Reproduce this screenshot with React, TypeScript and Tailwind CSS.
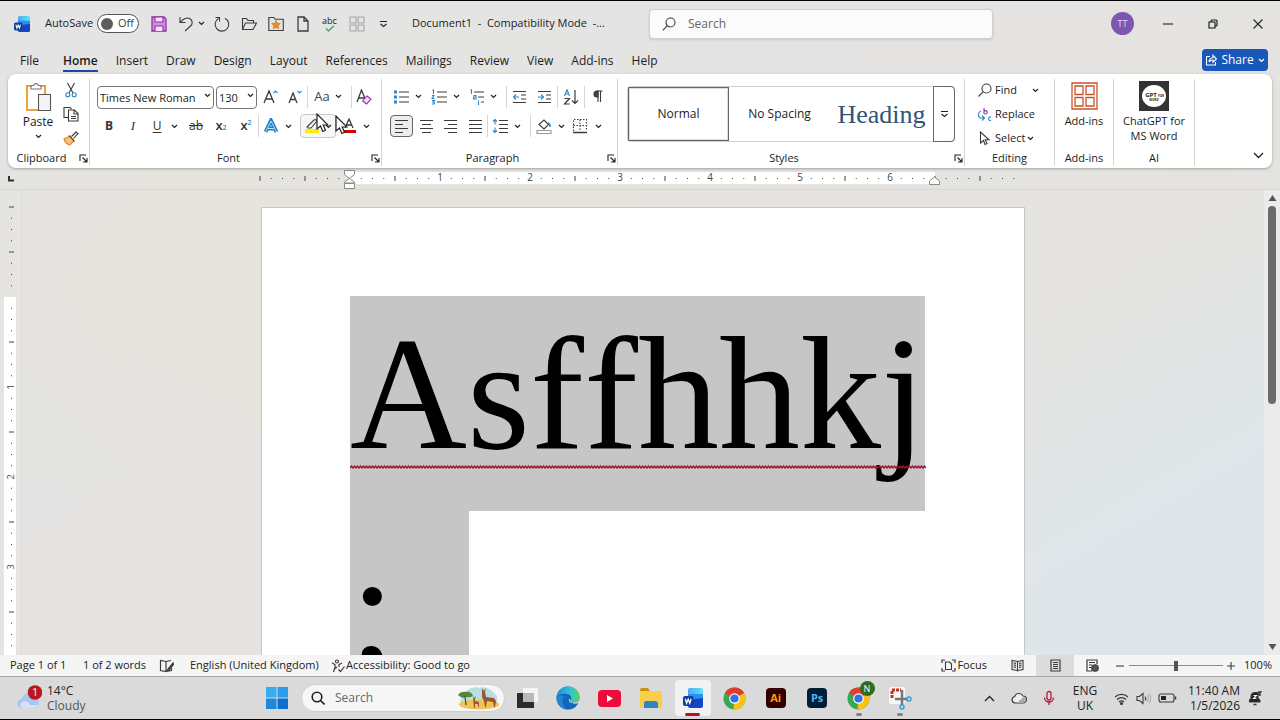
import React from 'react';
import { clsx } from 'clsx';

type IconProps = { children: React.ReactNode; w?: number; h?: number; className?: string };

// Small stroke icon drawn on its own pixel grid
const Icon: React.FC<IconProps> = ({ children, w = 18, h = 18, className }) => (
  <svg
    width={w}
    height={h}
    viewBox={`0 0 ${w} ${h}`}
    fill="none"
    stroke="#3b3b3b"
    strokeWidth="1.1"
    aria-hidden="true"
    className={clsx('shrink-0', className)}
  >
    {children}
  </svg>
);

const Chevron: React.FC<{ className?: string }> = ({ className }) => (
  <Icon w={7} h={5} className={className}>
    <path d="M1 1l2.500 2.500L6 1" stroke="#222" strokeWidth="1.200" />
  </Icon>
);

const Sep: React.FC = () => <span className="h-[22px] w-px shrink-0 bg-[#d6d6d6]" />;

type ToolProps = { label: string; className?: string; children: React.ReactNode };

const Tool: React.FC<ToolProps> = ({ label, className, children }) => (
  <button
    type="button"
    aria-label={label}
    className={clsx('flex h-[22px] shrink-0 items-center justify-center', className)}
  >
    {children}
  </button>
);

const Drop: React.FC<{ label: string; className?: string }> = ({ label, className }) => (
  <Tool label={label} className={className ?? 'w-[10px]'}>
    <Chevron />
  </Tool>
);

type GroupProps = { title: string; className: string; launcher?: boolean; children: React.ReactNode };

const Group: React.FC<GroupProps> = ({ title, className, launcher, children }) => (
  <section className={clsx('flex shrink-0 flex-col border-r border-[#d4d4d4]', className)}>
    <div className="min-h-0 flex-1">{children}</div>
    <div className="flex h-4 shrink-0 items-center">
      <h2 className="flex-1 text-center text-[11px] font-medium leading-4">{title}</h2>
      {launcher && (
        <button type="button" aria-label={`${title} settings`} className="flex w-3.5 justify-end pr-px">
          <Icon w={9} h={9}>
            <path d="M1 7V1h6M3.500 3.500l4 4M8 4v4H4" stroke="#222" />
          </Icon>
        </button>
      )}
    </div>
  </section>
);

const WordLogo: React.FC<{ size: number }> = ({ size }) => (
  <svg width={size} height={size} viewBox="0 0 20 20" aria-hidden="true" className="shrink-0">
    <defs>
      <linearGradient id="wordTop" x1="0" x2="1">
        <stop offset="0" stopColor="#4aa8f5" />
        <stop offset="1" stopColor="#5fe3f5" />
      </linearGradient>
    </defs>
    <path d="M5 2a2 2 0 012-2h11a2 2 0 012 2v5H5z" fill="url(#wordTop)" />
    <path d="M5 6h15v7H5z" fill="#2b8df0" />
    <path d="M5 12l15-2v8a2 2 0 01-2 2H7a2 2 0 01-2-2z" fill="#1744c2" />
    <rect x="0" y="8" width="10.500" height="10" rx="2" fill="#0f3f9e" />
    <path d="M2.300 10.800l1.300 4.500 1.600-4 1.600 4 1.300-4.500" fill="none" stroke="#fff" strokeWidth="1.300" />
  </svg>
);

const TitleBar: React.FC = () => (
  <header className="flex h-[45px] shrink-0 items-center">
    <div className="flex w-[649px] shrink-0 items-center pl-[14px]">
      <WordLogo size={16} />
      <label htmlFor="autosave" className="ml-[15px] w-[52px] text-[11px]">AutoSave</label>
      <button
        id="autosave"
        type="button"
        role="switch"
        aria-checked="false"
        className="flex h-[19px] w-[42px] items-center gap-[5px] rounded-full border border-[#555] bg-white pl-[3px] text-[11px] text-[#444]"
      >
        <span className="size-3 rounded-full bg-[#5c5c5c]" />
        Off
      </button>
      <Tool label="Save" className="ml-[6px] w-[27px]">
        <Icon w={16} h={16}>
          <path d="M1 1h12l2 2v12H1z" fill="#d88be8" stroke="#8e2fa3" strokeWidth="1.300" />
          <path d="M4 1h8v5H4zM4 15v-5h8v5" fill="#f6e3fa" stroke="#8e2fa3" />
        </Icon>
      </Tool>
      <Tool label="Undo" className="w-[27px]">
        <Icon w={16} h={16}>
          <path d="M2 1v5.500h5.500M2.300 6.300C5 2.500 9 1 12 2.800c3 2 2.700 5.200.5 7.200L7 15" />
        </Icon>
      </Tool>
      <Drop label="Undo list" className="-ml-1 w-[13px]" />
      <Tool label="Repeat" className="w-[27px]">
        <Icon w={16} h={16}>
          <path d="M11 2.300a6.800 6.800 0 11-6.500.2M1.500 1.500h4v4" />
        </Icon>
      </Tool>
      <Tool label="Open" className="w-[27px]">
        <Icon w={16} h={16}>
          <path d="M1.500 13.500v-11h4l1.500 2h5.500V7M1.500 13.500L4.500 7h11L12 13.500z" />
        </Icon>
      </Tool>
      <Tool label="Favourites" className="w-[27px]">
        <Icon w={16} h={16}>
          <path d="M.8 14.500v-13h5l1.500 1.800h8v11.200z" />
          <path d="M8 4.500l1.300 2.700 3 .4-2.200 2.100.6 3L8 11.300l-2.700 1.400.6-3-2.200-2.100 3-.4z" fill="#f08a24" stroke="#c96c10" strokeWidth=".6" />
        </Icon>
      </Tool>
      <Tool label="New" className="w-[27px]">
        <Icon w={12} h={16}>
          <path d="M1 1h6l4 4v10H1zM7 1v4h4" strokeWidth="1.300" />
        </Icon>
      </Tool>
      <button type="button" aria-label="Spelling" className="flex w-[27px] flex-col items-center text-[9px] leading-[9px]">
        abc
        <Icon w={10} h={7}>
          <path d="M1 3.500L3.500 6 9 .8" stroke="#3da65a" strokeWidth="1.300" />
        </Icon>
      </button>
      <Tool label="Add-ins" className="w-[27px]">
        <Icon w={16} h={16}>
          <path d="M1 1h6v6H1zM9 1h6v6H9zM1 9h6v6H1zM9 9h6v6H9z" stroke="#a5a5a5" />
        </Icon>
      </Tool>
      <Tool label="Customize toolbar" className="w-[27px]">
        <Icon w={9} h={8}>
          <path d="M1 1.500h7M1.500 4l3 2.500 3-2.500" stroke="#222" />
        </Icon>
      </Tool>
      <h1 className="ml-[15px] whitespace-pre text-[11px] font-medium">Document1  -  Compatibility Mode  -...</h1>
    </div>

    <label className="flex h-[30px] w-[344px] min-w-0 items-center gap-3 rounded border border-[#d2d0ce] bg-[#fbfbfb] pl-3 shadow-sm">
      <Icon w={14} h={14}>
        <circle cx="8.500" cy="5.500" r="4.500" />
        <path d="M5.300 8.700L.8 13.300" />
      </Icon>
      <input aria-label="Search" placeholder="Search" className="min-w-0 flex-1 bg-transparent text-[12px] outline-none placeholder:text-[#666]" />
    </label>

    <div className="ml-auto flex items-center">
      <button type="button" aria-label="Account" className="mr-[11px] flex size-[23px] items-center justify-center rounded-full bg-[#7f56ad] text-[9px] text-[#e8d8ff]">
        TT
      </button>
      <Tool label="Minimize" className="w-[45px]">
        <Icon w={10} h={10}><path d="M0 5h10" stroke="#222" /></Icon>
      </Tool>
      <Tool label="Restore" className="w-[45px]">
        <Icon w={10} h={10}>
          <path d="M1 3h6v6H1zM3 3V2q0-1 1-1h4q1 0 1 1v4q0 1-1 1H7" stroke="#111" />
        </Icon>
      </Tool>
      <Tool label="Close" className="w-[45px]">
        <Icon w={10} h={10}><path d="M.5.5l9 9M9.500.5l-9 9" stroke="#222" /></Icon>
      </Tool>
    </div>
  </header>
);

const tabs = ['Insert', 'Draw', 'Design', 'Layout', 'References', 'Mailings', 'Review', 'View', 'Add-ins', 'Help'];

const TabBar: React.FC = () => (
  <div className="flex h-7 shrink-0 items-center pl-5 pr-3">
    <nav className="flex items-center gap-[18px] pt-0.5 text-[12px] leading-5">
      <a href="#file" className="mr-[6px]">File</a>
      <a href="#home" className="border-b-2 border-[#1b4a9c] pt-0.5 font-semibold leading-[18px]">Home</a>
      {tabs.map(tab => (
        <a key={tab} href={`#${tab.toLowerCase()}`}>{tab}</a>
      ))}
    </nav>
    <button type="button" className="ml-auto flex h-[22px] w-[66px] items-center justify-center gap-1 rounded bg-[#1858b8] text-[12px] text-white">
      <Icon w={12} h={12}>
        <path d="M5 2.500H1.500v8.500h9V8M4 8c.3-3 2-4.300 4-4.300V1.300L11.500 5 8 8.200V6C6.500 6 5 6.500 4 8z" stroke="#fff" />
      </Icon>
      Share
      <Icon w={7} h={5}><path d="M1 1l2.500 2.500L6 1" stroke="#fff" strokeWidth="1.200" /></Icon>
    </button>
  </div>
);

const ClipboardGroup: React.FC = () => (
  <Group title="Clipboard" launcher className="w-[82px]">
    <div className="flex">
      <button type="button" className="ml-[9px] mt-[3px] flex w-[42px] flex-col items-center text-[12px] leading-4">
        <Icon w={28} h={30} className="mb-0.5">
          <path d="M3 4h18v24H3z" fill="#fff" stroke="#e8a33d" strokeWidth="2" />
          <path d="M7 7V3.500h2.500a2.600 2.600 0 015 0H17V7z" fill="#fff" stroke="#777" />
          <path d="M14.500 12.500h12v16h-12z" fill="#f4f4f4" stroke="#555" />
        </Icon>
        Paste
        <Chevron className="mt-1" />
      </button>
      <div className="ml-[3px] flex flex-col gap-[2px]">
        <Tool label="Cut" className="w-[18px]">
          <Icon w={12} h={16}>
            <path d="M2.500 1l5.500 10M9.500 1L4 11" />
            <circle cx="2.800" cy="12.800" r="2" stroke="#2a86c8" />
            <circle cx="9.200" cy="12.800" r="2" stroke="#2a86c8" />
          </Icon>
        </Tool>
        <Tool label="Copy" className="w-[18px]">
          <Icon w={16} h={16}>
            <path d="M5 11.500H1v-10h6l1.500 1.500" />
            <path d="M5.500 4h6l3.500 3.500V15H5.500zM11 4v4h4M8 10.500h5M8 12.500h5" />
          </Icon>
        </Tool>
        <Tool label="Format Painter" className="w-[18px]">
          <Icon w={16} h={16}>
            <path d="M1 9l6-3 4 5-4 4c-2-.5-5-3-6-6z" fill="#f6c27a" stroke="#d9822b" />
            <path d="M6 5.500l5.500 6M8.500 6.500L13 2l2 1.500-4.500 5" />
          </Icon>
        </Tool>
      </div>
    </div>
  </Group>
);

const selectClass = 'h-[23px] w-full appearance-none rounded border border-[#777] bg-white pl-[2px] text-[11px] leading-5 text-[#222]';

const FontGroup: React.FC = () => (
  <Group title="Font" launcher className="w-[292px]">
    <div className="flex h-[23px] items-center pl-[7px] mt-[6px]">
      <div className="relative mr-[2px] w-[117px] shrink-0">
        <select aria-label="Font" className={selectClass}><option>Times New Roman</option></select>
        <Chevron className="pointer-events-none absolute right-[3px] top-[9px]" />
      </div>
      <div className="relative w-[41px] shrink-0">
        <select aria-label="Font size" className={selectClass}><option>130</option></select>
        <Chevron className="pointer-events-none absolute right-[3px] top-[9px]" />
      </div>
      <Tool label="Grow font" className="ml-[2px] w-6">
        <Icon w={16} h={16}>
          <path d="M1 14L6 2l5 12M2.800 10h6.500" strokeWidth="1.300" />
          <path d="M10.500 4L12.500 2l2 2" stroke="#2a86c8" />
        </Icon>
      </Tool>
      <Tool label="Shrink font" className="w-6">
        <Icon w={14} h={16}>
          <path d="M1 14l4-10 4 10M2.500 10.500h5" strokeWidth="1.300" />
          <path d="M9.500 2l2 2 2-2" stroke="#2a86c8" />
        </Icon>
      </Tool>
      <Sep />
      <Tool label="Change case" className="ml-[2px] w-6 text-[13px] text-[#444]">Aa</Tool>
      <Drop label="Change case options" className="-ml-px w-[10px]" />
      <span className="w-2" />
      <Sep />
      <Tool label="Clear formatting" className="w-6">
        <Icon w={16} h={16}>
          <path d="M1 13L5.500 1 10 12M2.500 9H8" strokeWidth="1.300" />
          <path d="M6.500 12l4.500-5 4 3-4.500 5z" fill="#f2ddf5" stroke="#8e2fa3" />
        </Icon>
      </Tool>
    </div>
    <div className="flex h-[22px] items-center pl-[7px] mt-[7px] text-[13px] text-[#333]">
      <Tool label="Bold" className="w-6 text-[12px] font-bold">B</Tool>
      <Tool label="Italic" className="w-6 font-['Liberation_Serif',serif] italic">I</Tool>
      <Tool label="Underline" className="w-6 text-[12px] underline underline-offset-2">U</Tool>
      <Drop label="Underline style" />
      <Tool label="Strikethrough" className="ml-[5px] w-6 text-[12px] line-through">ab</Tool>
      <Tool label="Subscript" className="w-[26px] font-semibold">
        x<sub className="text-[7px] text-[#2a86c8]">2</sub>
      </Tool>
      <Tool label="Superscript" className="w-6 font-semibold">
        x<sup className="text-[7px] text-[#2a86c8]">2</sup>
      </Tool>
      <Sep />
      <Tool label="Text effects" className="w-6">
        <Icon w={16} h={16}>
          <path d="M2.500 14L8 2.500 13.500 14M5 10.500h6" stroke="#1f7fc4" strokeWidth="3.800" />
          <path d="M2.500 14L8 3l5.500 11M5 10.500h6" stroke="#bfe0f5" strokeWidth="1" />
        </Icon>
      </Tool>
      <Drop label="Text effects options" />
      <div className="ml-[7px] flex rounded border border-[#c8c8c8] bg-[#f7f7f7]">
        <Tool label="Highlight colour" className="w-[21px]">
          <Icon w={16} h={16}>
            <path d="M3 9L10 2q2-1 3 1L7 10H4z" />
            <path d="M1 13h14" stroke="#ffee00" strokeWidth="4" />
          </Icon>
        </Tool>
        <Drop label="Highlight colours" className="w-[13px]" />
      </div>
      <Tool label="Font colour" className="ml-[1px] w-6">
        <Icon w={16} h={16}>
          <path d="M4 10L8 1l4 9M5.500 7h5" strokeWidth="1.300" />
          <path d="M1 13.500h14" stroke="#d40000" strokeWidth="3" />
        </Icon>
      </Tool>
      <Drop label="Font colours" />
    </div>
  </Group>
);

// Rows of an alignment or list glyph as [x1, x2] pairs
const bars = (rows: number[][]) => rows.map(([a, b], i) => <path key={i} d={`M${a} ${2.5 + i * 4}H${b}`} />);

const ParagraphGroup: React.FC = () => (
  <Group title="Paragraph" launcher className="w-[236px]">
    <div className="flex h-[23px] items-center pl-[7px] mt-[6px]">
      <Tool label="Bullets" className="w-[23px]">
        <Icon w={16} h={16}>
          <path d="M6 3h10M6 8h10M6 13h10" />
          <path d="M1 3h3M1 8h3M1 13h3" stroke="#2a86c8" strokeWidth="3" />
        </Icon>
      </Tool>
      <Drop label="Bullet styles" className="w-3" />
      <Tool label="Numbering" className="ml-[3px] w-[23px]">
        <Icon w={16} h={16}>
          <path d="M6 3h10M6 8h10M6 13h10" />
          <path d="M1.500 1.500l1-.5v4M1 6.500h2L1 9.500h2.500M1 11.500h2.500L2 13l1.500.5L3 15H1" stroke="#2a86c8" />
        </Icon>
      </Tool>
      <Drop label="Numbering styles" className="w-3" />
      <Tool label="Multilevel list" className="ml-[3px] w-[23px]">
        <Icon w={16} h={16}>
          <path d="M5 3h10M9 8h6M12 13h3" />
          <path d="M1.500 1.500l1-.5v4M4.500 6.500h2.500V10H4.500V8H7M9.500 11v.8M9.500 12.500V16" stroke="#2a86c8" />
        </Icon>
      </Tool>
      <Drop label="Multilevel styles" />
      <span className="w-2" />
      <Sep />
      <Tool label="Decrease indent" className="w-[25px]">
        <Icon w={15} h={14}>
          <path d="M1 1.500h13M9 5h5M9 9h5M1 12.500h13" />
          <path d="M7 7H1.500M4 4.500L1.500 7 4 9.500" stroke="#2a86c8" />
        </Icon>
      </Tool>
      <Tool label="Increase indent" className="w-[25px]">
        <Icon w={15} h={14}>
          <path d="M1 1.500h13M9 5h5M9 9h5M1 12.500h13" />
          <path d="M1 7h5.500M4 4.500L6.500 7 4 9.500" stroke="#2a86c8" />
        </Icon>
      </Tool>
      <Sep />
      <Tool label="Sort" className="w-[26px]">
        <Icon w={16} h={16}>
          <path d="M1.500 7L4 .8 6.500 7M2.300 5h3.400" stroke="#2a86c8" />
          <path d="M1.500 9.500h5L1.500 15h5.300M12 1v13.500M9 11.500l3 3 3-3" strokeWidth="1.200" />
        </Icon>
      </Tool>
      <Sep />
      <Tool label="Show marks" className="w-[26px]">
        <Icon w={10} h={13}>
          <path d="M5 1v11M7.500 1v11M9.500 1H4" />
          <path d="M5 1H4a3 3 0 000 6h1z" fill="#444" />
        </Icon>
      </Tool>
    </div>
    <div className="flex h-[22px] items-center pl-[8px] mt-[7px]">
      <Tool label="Align left" className="mr-px w-[23px] rounded border border-[#666] bg-[#ededed]">
        <Icon w={15} h={16}>{bars([[1, 14], [1, 9], [1, 14], [1, 9]])}</Icon>
      </Tool>
      <Tool label="Centre" className="w-6">
        <Icon w={15} h={16}>{bars([[1, 14], [3, 12], [1, 14], [3, 12]])}</Icon>
      </Tool>
      <Tool label="Align right" className="w-[25px]">
        <Icon w={15} h={16}>{bars([[1, 14], [5, 14], [1, 14], [5, 14]])}</Icon>
      </Tool>
      <Tool label="Justify" className="w-6">
        <Icon w={15} h={16}>{bars([[1, 14], [1, 14], [1, 14], [1, 14]])}</Icon>
      </Tool>
      <Sep />
      <Tool label="Line spacing" className="w-6">
        <Icon w={16} h={16}>
          <path d="M7 2.500h9M7 6.500h9M7 10.500h9M7 14.500h9" />
          <path d="M3 1.500v5M1 3.500l2-2 2 2M3 9.500v5M1 12.500l2 2 2-2" stroke="#2a86c8" />
        </Icon>
      </Tool>
      <Drop label="Line spacing options" />
      <span className="w-2" />
      <Sep />
      <Tool label="Shading" className="w-[25px]">
        <Icon w={16} h={16}>
          <path d="M3 6.500L8 2l4.500 4.500L8 11z" />
          <path d="M12 5q2.500 1 2 4" stroke="#2a86c8" strokeWidth="1.500" />
          <path d="M1 12.500h14v3H1z" stroke="#999" />
        </Icon>
      </Tool>
      <Drop label="Shading colours" />
      <Tool label="Borders" className="ml-[2px] w-6">
        <Icon w={16} h={16}>
          <path d="M1.500 13V1.500h13V13M8 1.500V13M1.500 7.500h13" strokeDasharray="1.500 1.500" />
          <path d="M1 14.500h14" strokeWidth="1.600" />
        </Icon>
      </Tool>
      <Drop label="Border styles" className="w-3" />
    </div>
  </Group>
);

const StylesGroup: React.FC = () => (
  <Group title="Styles" launcher className="w-[347px]">
    <div className="mx-[9px] mt-[7px] flex h-[56px] items-stretch rounded border border-[#d0d0d0]">
      <button type="button" className="w-[101px] border border-[#666] text-[12px] font-medium ring-1 ring-inset ring-[#ddd]">Normal</button>
      <button type="button" className="w-[101px] text-[12px] font-medium">No Spacing</button>
      <button type="button" className="flex flex-1 items-center justify-center font-['Liberation_Serif',serif] text-[26px] text-[#2f5478]">
        Heading
      </button>
      <button type="button" aria-label="More styles" className="-my-px -mr-px flex w-[22px] items-center justify-center rounded-r border border-[#666]">
        <Icon w={9} h={8}><path d="M1 1.500h7M1.500 4l3 2.500 3-2.500" stroke="#222" /></Icon>
      </button>
    </div>
  </Group>
);

const EditingGroup: React.FC = () => (
  <Group title="Editing" className="w-[90px]">
    <div className="flex flex-col gap-[2px] pl-3 text-[11px]">
      <button type="button" className="flex h-[22px] items-center gap-[3px]">
        <Icon w={15} h={14}>
          <circle cx="9.500" cy="5.500" r="4.500" />
          <path d="M6.300 8.700L1.500 13.500" />
        </Icon>
        Find
        <Chevron className="ml-3" />
      </button>
      <button type="button" className="flex h-[22px] items-center gap-[3px]">
        <Icon w={15} h={15}>
          <path d="M7 1v5M7 4.500a1.700 1.700 0 103 0 1.700 1.700 0 00-3 0" stroke="#8e2fa3" />
          <path d="M4 4C1 5 .5 10 3.500 11H7M5 8.500L7.500 11 5 13.500M14 10c-3-1-3.500 4 0 3.500" stroke="#2a86c8" />
        </Icon>
        Replace
      </button>
      <button type="button" className="flex h-[22px] items-center gap-[3px]">
        <Icon w={15} h={15}>
          <path d="M3.500 1v11l3-2.500 1.500 4 2-1-1.800-3.700H12z" />
        </Icon>
        Select
        <Chevron className="-ml-px" />
      </button>
    </div>
  </Group>
);

const Ribbon: React.FC = () => (
  <div className="mx-2 flex h-[94px] shrink-0 overflow-hidden rounded-lg bg-white pb-[2px] pt-[5px] shadow-[0_1px_3px_rgba(0,0,0,0.3)]">
    <ClipboardGroup />
    <FontGroup />
    <ParagraphGroup />
    <StylesGroup />
    <EditingGroup />
    <Group title="Add-ins" className="w-[59px]">
      <button type="button" className="mt-[3px] flex w-full flex-col items-center gap-[3px] text-[11px] leading-4">
        <Icon w={27} h={28}>
          <path d="M1 1h25v26H1z" stroke="#c9532a" strokeWidth="1.300" />
          <path d="M4 4h8v8.500H4zM15 4h8v8.500h-8zM4 15.500h8V24H4zM15 15.500h8V24h-8z" stroke="#c9532a" strokeWidth="1.300" />
        </Icon>
        Add-ins
      </button>
    </Group>
    <Group title="AI" className="w-[81px]">
      <button type="button" className="mt-[2px] flex w-full flex-col items-center gap-[2px] text-[11px] leading-[15px]">
        <svg width="30" height="30" viewBox="0 0 30 30" className="shrink-0" aria-hidden="true">
          <rect width="30" height="30" fill="#333" />
          <ellipse cx="15" cy="15" rx="12" ry="11" fill="#fff" />
          <text x="12" y="16" textAnchor="middle" fontSize="6" fontWeight="700" fill="#222">GPT</text>
          <text x="22" y="16" textAnchor="middle" fontSize="3" fontWeight="700" fill="#222">FOR</text>
          <text x="15" y="20" textAnchor="middle" fontSize="3" fontWeight="700" fill="#222">WORD</text>
        </svg>
        <span>ChatGPT for<br />MS Word</span>
      </button>
    </Group>
    <div className="flex flex-1 items-end justify-end pb-[7px] pr-2">
      <button type="button" aria-label="Collapse ribbon">
        <Icon w={11} h={7}><path d="M1 1l4.500 4.500L10 1" stroke="#222" strokeWidth="1.300" /></Icon>
      </button>
    </div>
  </div>
);

const INCH = 90;

// Ticks every eighth of an inch, counted from the margin
const Ruler: React.FC = () => {
  const ticks = Array.from({ length: 68 }, (_, i) => i - 8);
  return (
    <svg width="764" height="22" viewBox="-90 0 764 22" className="shrink-0 overflow-visible" aria-hidden="true">
      <rect x="0" y="4" width="585" height="12" fill="#fff" />
      {ticks.map(t => {
        if (t === 0) return null;
        const x = (t * INCH) / 8;
        if (t > 0 && t < 56 && t % 8 === 0) {
          return <text key={t} x={x} y="13" textAnchor="middle" fontSize="10" fill="#444">{t / 8}</text>;
        }
        const half = t % 4 === 0;
        return <rect key={t} x={x - 0.5} y={half ? 8 : 10} width="1" height={half ? 5 : 1} fill="#444" />;
      })}
      <path d="M-5.500 2.500h10v4l-5 4-5-4zM-5.500 15v-1l5-3.500 5 3.500v1zM-5.500 15.500h10v5h-10z" fill="#fff" stroke="#888" />
      <path d="M579.500 16.500v-3.500l5-4 5 4v3.500z" fill="#fff" stroke="#888" />
    </svg>
  );
};

const SideRuler: React.FC = () => {
  const ticks = Array.from({ length: 40 }, (_, i) => i - 8);
  return (
    <div className="w-[22px] shrink-0 overflow-hidden border-r border-[#dcdcdc]">
      <svg width="20" height="465" viewBox="0 -107 20 465" aria-hidden="true">
        <rect x="4" y="0" width="12" height="365" fill="#fff" />
        {ticks.map(t => {
          if (t === 0) return null;
          const y = (t * INCH) / 8;
          if (t > 0 && t % 8 === 0) {
            return <text key={t} transform={`translate(14 ${y}) rotate(-90)`} textAnchor="middle" fontSize="9" fill="#444">{t / 8}</text>;
          }
          const half = t % 4 === 0;
          return <rect key={t} x={half ? 9 : 11} y={y - 0.5} width={half ? 5 : 1} height="1" fill="#444" />;
        })}
      </svg>
    </div>
  );
};

const squiggle = `M0 3${' l1.500 -2 l1.500 2'.repeat(192)}`;

const Page: React.FC = () => (
  <main className="mx-auto h-full w-[764px] shrink-0 border border-b-0 border-[#c6c6c6] bg-white pl-[88px] pt-[88px] font-['Liberation_Serif',serif] text-[162px] leading-[195px] text-black [font-kerning:none]">
    <p className="relative w-[575px] bg-[#c6c6c6] pb-5">
      Asffhhkj
      <svg width="576" height="4" viewBox="0 0 576 4" fill="none" className="absolute left-0 top-[169px]" aria-hidden="true">
        <path d={squiggle} stroke="#9b1230" strokeWidth="1.300" />
      </svg>
    </p>
    <p className="w-[119px] bg-[#c6c6c6] pb-5">;</p>
  </main>
);

const Workspace: React.FC = () => (
  <div className="flex min-h-0 flex-1 flex-col">
    <div className="flex h-[22px] shrink-0 border-b border-[#d8d6d2]">
      <div className="flex w-[22px] shrink-0 items-center pl-2">
        <Icon w={6} h={6}><path d="M1 0v4.500h5" stroke="#333" strokeWidth="2" /></Icon>
      </div>
      <div className="flex flex-1 justify-center">
        <Ruler />
      </div>
      <div className="w-[18px] shrink-0" />
    </div>
    <div className="flex min-h-0 flex-1">
      <SideRuler />
      <div className="flex min-w-0 flex-1 overflow-hidden pt-[17px]">
        <Page />
      </div>
      <div className="flex w-4 shrink-0 flex-col items-center bg-[#ebebeb] py-1">
        <svg width="9" height="8" viewBox="0 0 9 8" aria-hidden="true"><path d="M4.500 1L8.500 7h-8z" fill="#555" /></svg>
        <div className="mt-1 h-[198px] w-2 rounded-full bg-[#6b6b6b]" />
        <svg width="9" height="8" viewBox="0 0 9 8" className="mt-auto" aria-hidden="true"><path d="M4.500 7l4-6h-8z" fill="#555" /></svg>
      </div>
    </div>
  </div>
);

const StatusBar: React.FC = () => (
  <footer className="flex h-[22px] shrink-0 items-center border-b border-[#a8a8a8] bg-[#f5f5f5] text-[11px] text-[#222]">
    <span className="ml-[10px] w-[73px] font-medium">Page 1 of 1</span>
    <span className="w-[76px]">1 of 2 words</span>
    <button type="button" aria-label="Proofing" className="w-[31px]">
      <Icon w={15} h={14}>
        <path d="M7 2.500L1.500 1.500v10L7 12.500zM7 2.500l5-1M7 12.500l5.500-1V9M14 4l-5 6-1 2 2-1 4.500-5.500z" strokeWidth="1.200" />
      </Icon>
    </button>
    <span className="w-[141px]">English (United Kingdom)</span>
    <button type="button" className="flex items-center gap-px font-medium">
      <Icon w={14} h={14}>
        <circle cx="6" cy="2.500" r="1.500" />
        <path d="M1 4l3 1.500v3L2.500 13M11 4L8 5.500V8M4 9.500l2-1.500M7.500 10.500l2 2 4-5" strokeWidth="1.200" />
      </Icon>
      Accessibility: Good to go
    </button>
    <div className="ml-auto flex h-full items-center pr-2">
      <button type="button" className="mr-6 flex items-center gap-[1px] font-medium whitespace-nowrap">
        <Icon w={15} h={13}>
          <path d="M1 4V1h3M1 9v3h3M14 4V1h-3M14 9v3h-3" strokeWidth="1.200" />
          <path d="M4.500 3h4l2 2v5.500h-6z" />
        </Icon>
        Focus
      </button>
      <button type="button" aria-label="Read mode" className="mr-3">
        <Icon w={13} h={13}>
          <path d="M6.500 2.500L1 1.500v9l5.500 1 5.500-1v-9zM6.500 2.500v10M2.500 4l2.500.4M2.500 6l2.500.4M2.500 8l2.500.4M8 4.400l2.500-.4M8 6.400l2.500-.4M8 8.400l2.500-.4" />
        </Icon>
      </button>
      <button type="button" aria-label="Print layout" className="flex h-full w-[38px] items-center justify-center bg-[#dcdcdc]">
        <Icon w={11} h={13}>
          <path d="M1 1h9v11H1zM3 3.500h5M3 5.500h5M3 7.500h5M3 9.500h5" strokeWidth="1.200" />
        </Icon>
      </button>
      <button type="button" aria-label="Web layout" className="ml-3">
        <Icon w={13} h={13}>
          <path d="M6 12H1V1h10v4M3 3.500h6M3 6h3M3 8.500h2" strokeWidth="1.200" />
          <circle cx="9" cy="9" r="3.300" fill="#555" />
        </Icon>
      </button>
      <button type="button" aria-label="Zoom out" className="ml-[17px] flex w-[13px]">
        <Icon w={8} h={8}><path d="M0 4h8" /></Icon>
      </button>
      <input
        type="range"
        aria-label="Zoom"
        defaultValue={50}
        className="h-3 w-[94px] appearance-none bg-[linear-gradient(#8a8a8a,#8a8a8a)] bg-[length:100%_1px] bg-center bg-no-repeat [&::-webkit-slider-thumb]:h-[10px] [&::-webkit-slider-thumb]:w-1 [&::-webkit-slider-thumb]:appearance-none [&::-webkit-slider-thumb]:bg-[#555]"
      />
      <button type="button" aria-label="Zoom in" className="ml-1">
        <Icon w={8} h={8}><path d="M0 4h8M4 0v8" /></Icon>
      </button>
      <span className="w-[37px] text-right">100%</span>
    </div>
  </footer>
);

const Chrome: React.FC = () => (
  <svg width="23" height="23" viewBox="0 0 24 24" aria-hidden="true">
    <circle cx="12" cy="12" r="11.500" fill="#3aa757" />
    <path d="M12 12L2.040 6.250A11.500 11.500 0 0121.960 6.250z" fill="#e33b2e" />
    <path d="M12 12l9.960-5.750A11.500 11.500 0 0112 23.500l-1-1z" fill="#fbc116" />
    <path d="M12 6.500h9.960L20 5z" fill="#e33b2e" />
    <circle cx="12" cy="12" r="5.500" fill="#fff" />
    <circle cx="12" cy="12" r="4.300" fill="#2f74e6" />
  </svg>
);

const Edge: React.FC = () => (
  <svg width="24" height="24" viewBox="0 0 24 24" aria-hidden="true">
    <defs>
      <linearGradient id="edgeTop" x1="0" y1="0.5" x2="1" y2="0.5">
        <stop offset="0" stopColor="#1a8fe0" />
        <stop offset="0.6" stopColor="#35c1d8" />
        <stop offset="1" stopColor="#5bd75a" />
      </linearGradient>
    </defs>
    <circle cx="12" cy="12" r="11.500" fill="#1367b8" />
    <path d="M.6 11C1.500 4.500 6.500.5 12 .5c6.500 0 11.500 5 11.500 10.500 0 3.500-2.500 5.500-5.500 5.500-2.500 0-4-1-3.500-2 1.500-1.500 1-5.500-3-6.500C7 7 2 8 .6 11z" fill="url(#edgeTop)" />
    <path d="M13 12.500c-1 4 4 6.500 9.500 4.500l2-3-1-1c-.5 2.500-3 3.500-5.500 3.500-2.500 0-4-1-3.500-2z" fill="#dadada" />
    <path d="M8 10c-3 4-2 10 3 13.400C5 23 .5 18 .6 12 2 9 5 8.500 8 10z" fill="#1f86d4" />
  </svg>
);

type AppProps = { label: string; running?: 'active' | 'open'; children: React.ReactNode };

const TaskApp: React.FC<AppProps> = ({ label, running, children }) => (
  <button
    type="button"
    aria-label={label}
    className={clsx('relative flex h-9 w-9 items-center justify-center rounded', running === 'active' && 'bg-[#f2f2f2]')}
  >
    {children}
    {running === 'active' && <span className="absolute bottom-0 h-[3px] w-[15px] rounded-full bg-[#b3142c]" />}
    {running === 'open' && <span className="absolute bottom-0 h-[3px] w-[6px] rounded-full bg-[#858585]" />}
  </button>
);

const Taskbar: React.FC = () => (
  <div className="flex h-[42px] shrink-0 items-center bg-[#dadada] text-[12px] text-[#222]">
    <button type="button" className="flex w-[256px] shrink-0 items-center gap-[5px] pl-[17px] text-left leading-[15px]">
      <svg width="25" height="26" viewBox="0 0 25 26" aria-hidden="true">
        <path d="M5 23a4.500 4.500 0 010-9 6.500 6.500 0 0112-2.500A6 6 0 0118 23z" fill="#a9c6f2" />
        <path d="M5 23a4 4 0 012-7q5 0 6 4h8a5 5 0 01-4 3z" fill="#d4e3fa" />
        <circle cx="18" cy="7.500" r="7.300" fill="#b8191f" />
        <text x="18" y="11" textAnchor="middle" fontSize="10" fill="#fff">1</text>
      </svg>
      <span>
        14°C
        <br />
        <span className="text-[#555]">Cloudy</span>
      </span>
    </button>
    <button type="button" aria-label="Start" className="flex w-[41px] shrink-0 justify-center">
      <svg width="22" height="22" viewBox="0 0 22 22" aria-hidden="true">
        <path d="M0 0h10.500v10.500H0z" fill="#35aef0" />
        <path d="M11.500 0H22v10.500H11.500z" fill="#2a9de8" />
        <path d="M0 11.500h10.500V22H0z" fill="#1a8ade" />
        <path d="M11.500 11.500H22V22H11.500z" fill="#0f6fcf" />
      </svg>
    </button>
    <label className="ml-1 flex h-7 w-[204px] shrink-0 items-center gap-[10px] rounded-full border border-[#cfcfcf] bg-[#f6f6f6] pl-[9px] pr-1">
      <Icon w={14} h={14}>
        <circle cx="6" cy="6" r="4.800" stroke="#222" strokeWidth="1.600" />
        <path d="M9.500 9.500l4 4" stroke="#222" strokeWidth="1.600" />
      </Icon>
      <input aria-label="Search Windows" placeholder="Search" className="w-0 flex-1 bg-transparent text-[12px] outline-none placeholder:text-[#666]" />
      <svg width="43" height="24" viewBox="0 0 43 24" aria-hidden="true">
        <path d="M5 9Q14-1 22 2q9-3 18 8v6H3z" fill="#b9dfe4" />
        <ellipse cx="22" cy="18.500" rx="20" ry="5" fill="#eec455" />
        <path d="M1 9q3-4 8-3 5-1 7 4-4 2-7 1-4 2-8-2z" fill="#4d8a3c" />
        <path d="M8 10l1 9" stroke="#70482a" strokeWidth="1.300" />
        <path d="M25 2l2 3 2-3-1 4 1 5 8 1 2 3-1 6h-1l-1-5-6-1-1 6h-1l-1-6-2-4zM16 10l1 2 2-2-1 3v2l4 1v5h-1v-3h-3v4h-1z" fill="#97592f" />
      </svg>
    </label>
    <div className="ml-1 flex w-[409px] shrink-0 justify-between">
      <TaskApp label="Task view">
        <svg width="23" height="22" viewBox="0 0 23 22" aria-hidden="true">
          <path d="M1 6h17v15H1z" fill="#2b2b2b" />
          <path d="M7 1h15v14H7z" fill="#f4f4f4" />
          <path d="M7 6h11v9H7z" fill="#b9b9b9" />
        </svg>
      </TaskApp>
      <TaskApp label="Edge"><Edge /></TaskApp>
      <TaskApp label="YouTube">
        <svg width="23" height="17" viewBox="0 0 23 17" aria-hidden="true">
          <rect width="23" height="17" rx="4" fill="#ed0b3c" />
          <path d="M9 5l6 3.500L9 12z" fill="#fff" />
        </svg>
      </TaskApp>
      <TaskApp label="File Explorer">
        <svg width="24" height="22" viewBox="0 0 24 22" aria-hidden="true">
          <path d="M1 3q0-2 2-2h6l2 3H1z" fill="#c98f12" />
          <path d="M1 4h20q2 0 2 2v13q0 2-2 2H3q-2 0-2-2z" fill="#f9ce4b" />
          <path d="M5 17q0-3 2-3h9q3 0 3 3v4H5z" fill="#2c85c7" />
        </svg>
      </TaskApp>
      <TaskApp label="Word" running="active"><WordLogo size={20} /></TaskApp>
      <TaskApp label="Chrome"><Chrome /></TaskApp>
      <TaskApp label="Illustrator">
        <span className="flex size-5 items-center justify-center rounded bg-[#330000] text-[11px] font-bold text-[#ff9a00]">Ai</span>
      </TaskApp>
      <TaskApp label="Photoshop">
        <span className="flex size-5 items-center justify-center rounded bg-[#001e36] text-[11px] font-bold text-[#4fb4ff]">Ps</span>
      </TaskApp>
      <TaskApp label="Chrome, N" running="open">
        <Chrome />
        <span className="absolute right-[2px] top-[1px] flex size-[15px] items-center justify-center rounded-full bg-[#2f6b22] text-[9px] text-white">N</span>
      </TaskApp>
      <TaskApp label="Snipping Tool" running="open">
        <svg width="24" height="24" viewBox="0 0 24 24" fill="none" aria-hidden="true">
          <rect x="1" y="1" width="16" height="17" rx="2" fill="#f7f7f7" />
          <path d="M4 12V4h9" stroke="#c8321f" strokeWidth="3" strokeDasharray="3 1" />
          <path d="M14 4v15M7 13h13" stroke="#777" strokeWidth="2.500" />
          <circle cx="21" cy="13" r="2" stroke="#2ba0df" strokeWidth="1.500" />
          <circle cx="14" cy="21" r="2" stroke="#2ba0df" strokeWidth="1.500" />
        </svg>
      </TaskApp>
    </div>
    <div className="ml-auto flex items-center pr-[18px] leading-[15px]">
      <Tool label="Hidden icons" className="w-[30px]">
        <Icon w={11} h={7}><path d="M1 6l4.500-4.500L10 6" stroke="#222" strokeWidth="1.300" /></Icon>
      </Tool>
      <Tool label="OneDrive" className="w-[30px]">
        <Icon w={16} h={12}>
          <path d="M4 11a3.300 3.300 0 01-.3-6.500A4.500 4.500 0 0112 4a3.500 3.500 0 010 7z" fill="#eee" />
          <path d="M6 11l7-6.500q3 1.500 1.500 5L12 11z" fill="#aaa" stroke="none" />
        </Icon>
      </Tool>
      <Tool label="Microphone" className="w-[30px]">
        <Icon w={12} h={16}>
          <path d="M4 3.500a2 2 0 014 0V8a2 2 0 01-4 0zM1.500 7.500a4.500 4.500 0 009 0M6 12v3" stroke="#b8193c" strokeWidth="1.300" />
        </Icon>
      </Tool>
      <button type="button" className="w-[42px] text-center">ENG<br />UK</button>
      <button type="button" aria-label="Network, volume and battery" className="ml-2 flex items-center gap-[7px]">
        <Icon w={15} h={13}>
          <path d="M1 5a9.500 9.500 0 0113 0M3 7.500a6.500 6.500 0 019 0M5 10a3.500 3.500 0 015 0" strokeWidth="1.300" />
          <circle cx="7.500" cy="11.500" r="1" fill="#333" />
        </Icon>
        <Icon w={15} h={13}>
          <path d="M1 4.500h2.500L7 1.500v10L3.500 8.500H1z" />
          <path d="M9 4.500q1.500 2 0 4" />
          <path d="M11 3q2.800 3.500 0 7M13 1.500q3.500 5 0 10" stroke="#b0b0b0" />
        </Icon>
        <Icon w={19} h={10}>
          <rect x="1" y="1" width="15" height="8" rx="2" />
          <path d="M3 3h5v4H3z" fill="#222" stroke="none" />
          <path d="M17.500 3.500v3" strokeWidth="1.500" />
        </Icon>
      </button>
      <button type="button" className="w-[63px] whitespace-nowrap text-right">11:40 AM<br />1/5/2026</button>
      <Tool label="Notifications" className="ml-2 w-[14px]">
        <Icon w={14} h={15}>
          <path d="M1.500 11V9L3 7.500V5q.5-3.500 4-3.500h3V7l2 2.500V11z" fill="#222" />
          <path d="M5.500 13.500h3M10 1h3l-3 3h3" strokeWidth="1.300" />
          <path d="M5.500 4.500h3l-3 3h3" stroke="#fff" />
        </Icon>
      </Tool>
    </div>
  </div>
);

const Cursor: React.FC<{ className: string }> = ({ className }) => (
  <svg width="13" height="20" viewBox="0 0 13 20" className={clsx('pointer-events-none absolute', className)} aria-hidden="true">
    <path d="M1 1v15l3.500-3 2.300 5.500 2.700-1.200L7.200 12H12z" fill="#fff" stroke="#222" strokeWidth="1.200" />
  </svg>
);

const App: React.FC = () => {
  return (
    <div className="relative flex h-screen flex-col overflow-hidden border-y border-black bg-[#e5e5e5] bg-[radial-gradient(ellipse_at_32%_40%,#e8e4dc_0%,#e6e4df_25%,transparent_45%),linear-gradient(150deg,#e4e4e4_30%,#e5e3df_60%,#dfe6ea_82%)] font-['Open_Sans','Noto_Sans',sans-serif] text-[#1c1c1c]">
      <TitleBar />
      <TabBar />
      <Ribbon />
      <Workspace />
      <StatusBar />
      <Taskbar />
      <Cursor className="left-[316px] top-[112px]" />
      <Cursor className="left-[335px] top-[114px]" />
    </div>
  );
};

export default App;
